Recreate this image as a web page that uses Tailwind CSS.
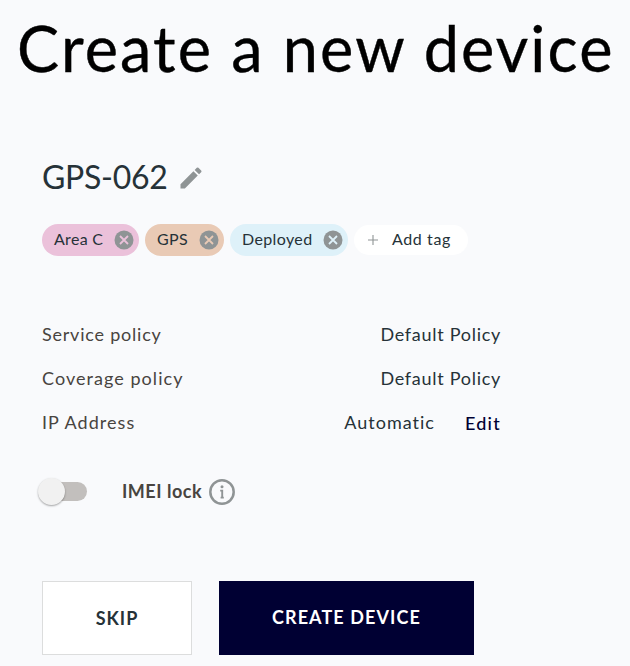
<!DOCTYPE html>
<html lang="en">
<head>
<meta charset="utf-8">
<title>Create a new device</title>
<script src="https://cdn.jsdelivr.net/npm/@tailwindcss/browser@4"></script>
</head>
<body class="w-[630px] h-[666px] overflow-hidden bg-[#f9fafc] font-['Lato',sans-serif] text-[#263238]">
<h1 class="h-[96px] pl-[17px] whitespace-nowrap text-[63px] leading-[96px] tracking-[2.1px] text-black [-webkit-text-stroke:0.4px_black]">Create a new device</h1>
<main class="pl-[42px]">
  <div class="flex h-[128px] pt-[61px]">
    <h2 class="w-[135px] whitespace-nowrap text-[32px] leading-[40px] tracking-[-0.3px]">GPS-062</h2>
    <svg class="mt-[7px] size-[28px]" viewBox="0 0 24 24" fill="#8f9495"><path d="M3 17.25V21h3.75L17.81 9.94l-3.75-3.75L3 17.25zM20.71 7.04a1 1 0 0 0 0-1.41l-2.34-2.34a1 1 0 0 0-1.41 0l-1.83 1.83 3.75 3.75 1.83-1.83z"/></svg>
  </div>
  <div class="flex h-[32px] items-center whitespace-nowrap text-[16px] leading-[30px]">
    <div class="flex h-[32px] w-[97px] items-center justify-between rounded-full bg-[#ebc1da] pl-[12px] pr-[5px]"><span class="h-[32px] tracking-[0.3px]">Area C</span>
      <svg class="-mt-px size-[20px]" viewBox="0 0 20 20"><circle cx="10" cy="10" r="9.5" fill="#8f9495"/><path d="M6 6l8 8M14 6l-8 8" stroke="#ebc1da" stroke-width="1.8"/></svg></div>
    <div class="ml-[6px] flex h-[32px] w-[79px] items-center justify-between rounded-full bg-[#e9cab5] pl-[12px] pr-[5px]"><span class="h-[32px] tracking-[0.3px]">GPS</span>
      <svg class="-mt-px size-[20px]" viewBox="0 0 20 20"><circle cx="10" cy="10" r="9.5" fill="#8f9495"/><path d="M6 6l8 8M14 6l-8 8" stroke="#e9cab5" stroke-width="1.8"/></svg></div>
    <div class="ml-[6px] flex h-[32px] w-[118px] items-center justify-between rounded-full bg-[#def1f9] pl-[12px] pr-[5px]"><span class="h-[32px] tracking-[0.38px]">Deployed</span>
      <svg class="-mt-px size-[20px]" viewBox="0 0 20 20"><circle cx="10" cy="10" r="9.5" fill="#8f9495"/><path d="M6 6l8 8M14 6l-8 8" stroke="#def1f9" stroke-width="1.8"/></svg></div>
    <div class="ml-[6px] flex h-[30px] w-[114px] items-center rounded-full bg-white pl-[14px]">
      <svg class="mr-[14px] size-[10px]" viewBox="0 0 10 10"><path d="M0 5h10M5 0v10" stroke="#8f9495" stroke-width="1.1"/></svg><span class="h-[32px] tracking-[0.6px]">Add tag</span></div>
  </div>
  <dl class="w-[459px] pt-[56px] text-[18px] leading-[44px]">
    <div class="flex h-[44px] justify-between"><dt class="tracking-[0.78px] text-[#484440]">Service policy</dt><dd class="tracking-[0.72px]">Default Policy</dd></div>
    <div class="flex h-[44px] justify-between"><dt class="tracking-[1.05px] text-[#484440]">Coverage policy</dt><dd class="tracking-[0.72px]">Default Policy</dd></div>
    <div class="flex h-[44px] justify-between"><dt class="tracking-[1.05px] text-[#484440]">IP Address</dt><dd class="flex gap-[30px] tracking-[1px]"><span>Automatic</span><a class="mt-px font-medium tracking-[1.25px] text-[#000033]">Edit</a></dd></div>
  </dl>
  <div class="flex h-[95px] items-center">
    <div class="-ml-[4px] flex h-[28px] w-[49px] items-center">
      <div class="ml-[8px] flex h-[19px] w-[41px] items-center rounded-full bg-[#c2bfbd]"><div class="-ml-[8px] size-[27px] shrink-0 rounded-full bg-[#f1f1f1] shadow-[0_1px_2px_rgba(0,0,0,0.35)]"></div></div>
    </div>
    <span class="ml-[35px] w-[87px] whitespace-nowrap text-[18px] font-bold tracking-[0.5px] text-[#484440]">IMEI lock</span>
    <svg class="size-[26px]" viewBox="0 0 26 26"><circle cx="13" cy="13" r="11.7" fill="none" stroke="#8f9495" stroke-width="2.5"/><circle cx="13" cy="7.8" r="1.5" fill="#8f9495"/><path d="M11.2 11.6h2v7.4M11.6 18.6h3.2" fill="none" stroke="#8f9495" stroke-width="1.9"/></svg>
  </div>
  <div class="mt-[42px] flex gap-[27px] text-[18px] font-bold">
    <button class="h-[74px] w-[150px] border border-[#dcdddd] bg-white tracking-[1px]">SKIP</button>
    <button class="h-[74px] w-[255px] bg-[#000033] pb-[2px] tracking-[1.1px] text-white">CREATE DEVICE</button>
  </div>
</main>
</body>
</html>
